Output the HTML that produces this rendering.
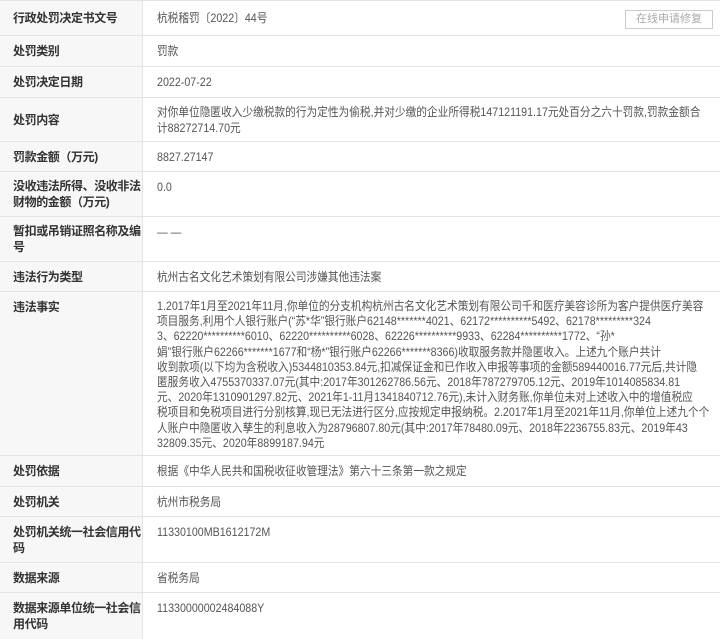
<!DOCTYPE html>
<html><head><meta charset="utf-8"><style>
body{margin:0;width:720px;height:639px;overflow:hidden;background:#fff;font-family:"Liberation Sans","Noto Sans CJK SC",sans-serif;font-size:12px;}
.r{position:absolute;left:0;width:720px;border-bottom:1px solid #e4e4e4;box-sizing:border-box;overflow:hidden}
.l{position:absolute;left:0;top:0;bottom:0;width:143px;background:#f7f7f7;border-right:1px solid #e4e4e4;box-sizing:border-box;padding:0 0 0 13px;color:#333;font-weight:bold;line-height:16px;display:flex;align-items:center;white-space:nowrap;letter-spacing:-0.4px}
.v{position:absolute;left:157px;top:0;bottom:0;color:#555;line-height:16px;display:flex;align-items:center;white-space:nowrap;transform:scaleX(0.89);transform-origin:left center}
.v2{position:absolute;left:157px;top:6px;color:#555;line-height:16px;white-space:nowrap;transform:scaleX(0.89);transform-origin:left top}
.btn{position:absolute;right:7px;top:9px;width:88px;height:19px;border:1px solid #ccc;color:#aaa;text-align:center;line-height:17px;box-sizing:border-box;font-size:11px}
</style></head><body>
<div class="r" style="top:0;height:36px;border-top:1px solid #e4e4e4"><div class="l">行政处罚决定书文号</div><div class="v">杭税稽罚〔2022〕44号</div><div class="btn">在线申请修复</div></div>
<div class="r" style="top:36px;height:31px"><div class="l">处罚类别</div><div class="v">罚款</div></div>
<div class="r" style="top:67px;height:31px"><div class="l">处罚决定日期</div><div class="v">2022-07-22</div></div>
<div class="r" style="top:98px;height:44px"><div class="l">处罚内容</div><div class="v">对你单位隐匿收入少缴税款的行为定性为偷税,并对少缴的企业所得税147121191.17元处百分之六十罚款,罚款金额合<br>计88272714.70元</div></div>
<div class="r" style="top:142px;height:30px"><div class="l">罚款金额（万元)</div><div class="v">8827.27147</div></div>
<div class="r" style="top:172px;height:45px"><div class="l">没收违法所得、没收非法<br>财物的金额（万元)</div><div class="v2" style="top:7px">0.0</div></div>
<div class="r" style="top:217px;height:45px"><div class="l">暂扣或吊销证照名称及编<br>号</div><div class="v2" style="top:7px">— —</div></div>
<div class="r" style="top:262px;height:30px"><div class="l">违法行为类型</div><div class="v">杭州古名文化艺术策划有限公司涉嫌其他违法案</div></div>
<div class="r" style="top:292px;height:164px"><div class="l" style="align-items:flex-start;padding-top:7px">违法事实</div><div class="v2" style="top:7px;line-height:15.2px">1.2017年1月至2021年11月,你单位的分支机构杭州古名文化艺术策划有限公司千和医疗美容诊所为客户提供医疗美容<br>项目服务,利用个人银行账户(“苏*华”银行账户62148*******4021、62172**********5492、62178*********324<br>3、62220**********6010、62220**********6028、62226**********9933、62284**********1772、“孙*<br>娟”银行账户62266*******1677和“杨*”银行账户62266*******8366)收取服务款并隐匿收入。上述九个账户共计<br>收到款项(以下均为含税收入)5344810353.84元,扣减保证金和已作收入申报等事项的金额589440016.77元后,共计隐<br>匿服务收入4755370337.07元(其中:2017年301262786.56元、2018年787279705.12元、2019年1014085834.81<br>元、2020年1310901297.82元、2021年1-11月1341840712.76元),未计入财务账,你单位未对上述收入中的增值税应<br>税项目和免税项目进行分别核算,现已无法进行区分,应按规定申报纳税。2.2017年1月至2021年11月,你单位上述九个个<br>人账户中隐匿收入孳生的利息收入为28796807.80元(其中:2017年78480.09元、2018年2236755.83元、2019年43<br>32809.35元、2020年8899187.94元</div></div>
<div class="r" style="top:456px;height:31px"><div class="l">处罚依据</div><div class="v">根据《中华人民共和国税收征收管理法》第六十三条第一款之规定</div></div>
<div class="r" style="top:487px;height:30px"><div class="l">处罚机关</div><div class="v">杭州市税务局</div></div>
<div class="r" style="top:517px;height:46px"><div class="l">处罚机关统一社会信用代<br>码</div><div class="v2" style="top:7px">11330100MB1612172M</div></div>
<div class="r" style="top:563px;height:30px"><div class="l">数据来源</div><div class="v">省税务局</div></div>
<div class="r" style="top:593px;height:46px;border-bottom:none"><div class="l">数据来源单位统一社会信<br>用代码</div><div class="v2" style="top:7px">11330000002484088Y</div></div>
</body></html>
